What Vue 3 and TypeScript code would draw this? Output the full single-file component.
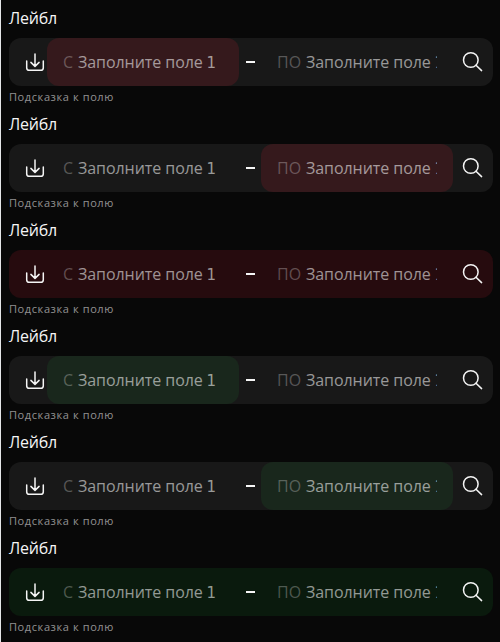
<script setup lang="ts">
type Highlight = 'first' | 'second' | 'both'
type Tone = 'error' | 'success'

interface RangeField {
  id: number
  tone: Tone
  highlight: Highlight
}

const fields: RangeField[] = [
  { id: 1, tone: 'error', highlight: 'first' },
  { id: 2, tone: 'error', highlight: 'second' },
  { id: 3, tone: 'error', highlight: 'both' },
  { id: 4, tone: 'success', highlight: 'first' },
  { id: 5, tone: 'success', highlight: 'second' },
  { id: 6, tone: 'success', highlight: 'both' },
]
</script>

<template>
  <main class="page">
    <section v-for="field in fields" :key="field.id" class="range">
      <div class="label">Лейбл</div>
      <div class="control" :class="field.highlight === 'both' ? field.tone : ''">
        <svg class="icon" viewBox="0 0 24 24">
          <path d="M12 3.9V16.2M7.9 12.4L12 16.4L16.1 12.4M3.7 11V17.7Q3.7 20.3 6.3 20.3H17.7Q20.3 20.3 20.3 17.7V11" />
        </svg>
        <div class="input" :class="field.highlight === 'first' ? field.tone : ''">
          <span class="prefix">С</span>
          <span class="value">Заполните поле <span class="digit">1</span></span>
        </div>
        <span class="divider"><i class="dash"></i></span>
        <div class="input" :class="field.highlight === 'second' ? field.tone : ''">
          <span class="prefix wide">ПО</span>
          <span class="value">Заполните поле <span class="digit">1</span></span>
        </div>
        <svg class="icon search" viewBox="0 0 24 24">
          <circle cx="10.8" cy="10" r="7.3" />
          <path d="M16 15.2L21.6 20.6" />
        </svg>
      </div>
      <div class="hint">Подсказка к полю</div>
    </section>
  </main>
</template>

<style>
body {
  background: #080808;
  overflow: hidden;
}
</style>

<style scoped>
.page {
  box-sizing: border-box;
  height: 642px;
  overflow: hidden;
  padding: 8px 7px 0 8px;
  border-left: 1px solid #e4e6e8;
  background: #080808;
  color: #f5f5f5;
  font-family: "Open Sans", sans-serif;
  font-size: 16px;
}
.range {
  height: 106px;
}
.label {
  height: 30px;
  font-size: 16px;
  line-height: 20px;
  letter-spacing: -0.2px;
}
.control {
  box-sizing: border-box;
  display: flex;
  align-items: center;
  height: 48px;
  padding-left: 14px;
  border-radius: 12px;
  background: #181818;
}
.control.error {
  background: #260b0e;
}
.control.success {
  background: #0a1a0d;
}
.icon {
  flex: none;
  width: 24px;
  height: 24px;
  fill: none;
  stroke: #f5f5f5;
  stroke-width: 1.5;
  stroke-linecap: round;
  stroke-linejoin: round;
}
.search {
  margin-left: 7px;
}
.input {
  box-sizing: border-box;
  display: flex;
  flex: none;
  align-items: center;
  width: 192px;
  height: 48px;
  padding: 0 16px;
  border-radius: 12px;
  line-height: 22px;
  white-space: pre;
}
.input.error {
  background: #35191c;
}
.input.success {
  background: #19271c;
}
.prefix {
  flex: none;
  width: 15px;
  color: rgba(255, 255, 255, 0.28);
}
.prefix.wide {
  width: 29px;
}
.value {
  flex: 1;
  min-width: 0;
  overflow: hidden;
  color: rgba(255, 255, 255, 0.56);
  letter-spacing: -0.06px;
}
.digit {
  margin-left: -0.3px;
  font-family: "DejaVu Sans", sans-serif;
  font-size: 15px;
}
.divider {
  display: flex;
  flex: none;
  justify-content: center;
  width: 22px;
}
.dash {
  width: 9px;
  height: 2px;
  margin-left: 1px;
  background: #f5f5f5;
}
.hint {
  margin-top: 4px;
  color: rgba(255, 255, 255, 0.56);
  font-size: 11px;
  line-height: 14px;
  letter-spacing: 0.6px;
}
</style>
